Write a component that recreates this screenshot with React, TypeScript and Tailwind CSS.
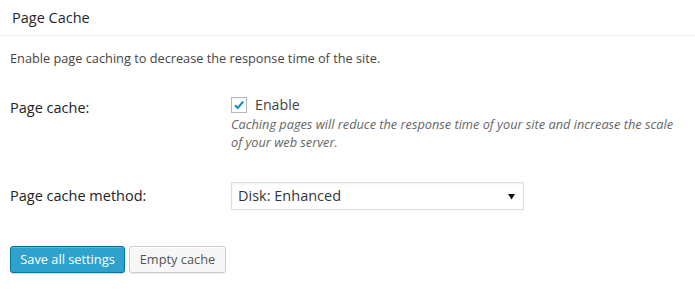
export default function App() {
  return (
    <div className="w-[695px] h-[304px] bg-white text-[#444] font-['Open_Sans',sans-serif]">
      <div className="h-[36px] px-3 flex items-center border-b border-[#eee] text-[14.5px] text-[#23282d]">
        Page Cache
      </div>
      <div className="px-[10px]">
        <p className="mt-[12px] text-[12.75px] leading-[20px]">
          Enable page caching to decrease the response time of the site.
        </p>

        <div className="mt-[27px] flex">
          <div className="w-[221px] pt-[3px] text-[14.5px] leading-[20px] text-[#222]">Page cache:</div>
          <div className="flex-1">
            <label className="flex items-center h-[20px] text-[14.2px] text-[#444]">
              <span className="w-[16px] h-[16px] border border-[#b4b9be] bg-white flex items-center justify-center shadow-[inset_0_1px_2px_rgba(0,0,0,0.07)]">
                <svg width="12" height="12" viewBox="0 0 12 12">
                  <path d="M2 6.2 L4.8 9 L10.2 2.6" fill="none" stroke="#1e8cbe" strokeWidth="2.2" />
                </svg>
              </span>
              <span className="ml-[8px]">Enable</span>
            </label>
            <p className="text-[12.75px] leading-[18px] italic text-[#666]">
              Caching pages will reduce the response time of your site and increase the scale of your web server.
            </p>
          </div>
        </div>

        <div className="mt-[31px] flex items-center">
          <div className="w-[221px] text-[14.5px] leading-[20px] text-[#222]">Page cache method:</div>
          <div className="w-[293px] h-[28px] border border-[#ddd] bg-white flex items-center justify-between pl-[6px] pr-[8px] text-[14.5px] text-[#32373c] shadow-[inset_0_1px_2px_rgba(0,0,0,0.07)]">
            <span>Disk: Enhanced</span>
            <svg width="7" height="7" viewBox="0 0 7 7">
              <path d="M0 1 H7 L3.5 6.5 Z" fill="#111" />
            </svg>
          </div>
        </div>

        <div className="mt-[36px] flex gap-[4px]">
          <button className="h-[27px] w-[115px] rounded-[3px] border border-[#0074a2] bg-[#2ea2cc] text-white text-[12.8px] shadow-[inset_0_1px_0_rgba(120,200,230,0.5),0_1px_0_rgba(0,0,0,0.15)]">
            Save all settings
          </button>
          <button className="h-[27px] w-[97px] rounded-[3px] border border-[#ccc] bg-[#f7f7f7] text-[#555] text-[12.8px] shadow-[inset_0_1px_0_#fff,0_1px_0_rgba(0,0,0,0.08)]">
            Empty cache
          </button>
        </div>
      </div>
    </div>
  )
}
